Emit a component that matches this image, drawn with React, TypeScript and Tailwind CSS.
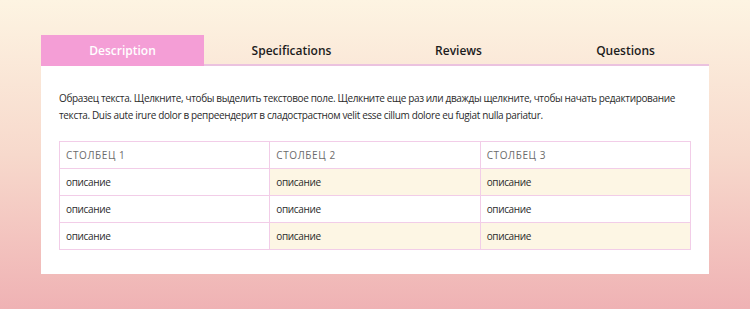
import React from "react";

const tabs = ["Specifications", "Reviews", "Questions"];

export default function App() {
  const rows = [0, 1, 2];
  return (
    <div
      className="w-[750px] h-[309px] bg-gradient-to-b from-[#fdf4e2] via-[#f7d9cc] to-[#efb2b4] pt-[35px] pl-[41px]"
      style={{ fontFamily: '"Open Sans", "Noto Sans", sans-serif' }}
    >
      <div className="w-[668px]">
        <div className="flex h-[31px]">
          <div className="w-[163px] h-[31px] bg-[#f49ed6] text-white text-[12px] font-semibold flex items-center justify-center">
            Description
          </div>
          <div className="flex-1 flex pl-[4px] border-b-2 border-[#ebc2df]">
            {tabs.map((t) => (
              <div
                key={t}
                className="flex-1 h-[29px] pt-[2px] text-[#1c1c1c] text-[12px] font-semibold flex items-center justify-center"
              >
                {t}
              </div>
            ))}
          </div>
        </div>
        <div className="bg-white h-[208px] px-[18px] pt-[24px]">
          <p className="text-[10px] tracking-[-0.35px] leading-[17px] text-[#2b2b2b]">
            Образец текста. Щелкните, чтобы выделить текстовое поле. Щелкните еще раз или дважды щелкните, чтобы начать редактирование текста. Duis aute irure dolor в репреендерит в сладострастном velit esse cillum dolore eu fugiat nulla pariatur.
          </p>
          <table className="mt-[17px] w-[632px] border-collapse border border-[#f2cde8]">
            <thead>
              <tr className="h-[27px]">
                {["СТОЛБЕЦ 1", "СТОЛБЕЦ 2", "СТОЛБЕЦ 3"].map((h) => (
                  <th
                    key={h}
                    className="w-1/3 border border-[#f2cde8] text-left font-normal pl-[6px] tracking-[0.6px] text-[#6b6b6b] text-[10px]"
                  >
                    {h}
                  </th>
                ))}
              </tr>
            </thead>
            <tbody>
              {rows.map((r) => (
                <tr key={r} className="h-[27px]">
                  {[0, 1, 2].map((c) => (
                    <td
                      key={c}
                      className={`border border-[#f2cde8] pl-[6px] text-[10px] tracking-[-0.35px] text-[#2b2b2b] ${
                        r !== 1 && c > 0 ? "bg-[#fdf6e4]" : "bg-white"
                      }`}
                    >
                      описание
                    </td>
                  ))}
                </tr>
              ))}
            </tbody>
          </table>
        </div>
      </div>
    </div>
  );
}
